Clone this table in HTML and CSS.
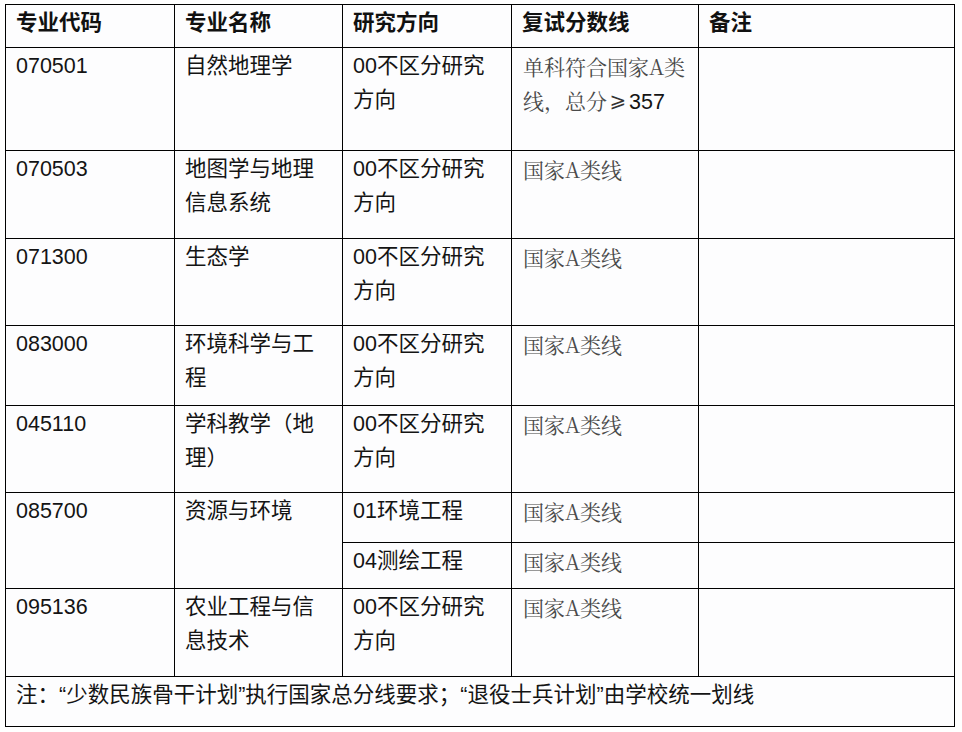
FILE: index.html
```html
<!DOCTYPE html>
<html lang="zh-CN">
<head>
<meta charset="utf-8">
<title>复试分数线</title>
<link rel="stylesheet" href="styles.css">
</head>
<body>
<div class="wrap">
<table class="score">
  <colgroup>
    <col class="c1"><col class="c2"><col class="c3"><col class="c4"><col class="c5">
  </colgroup>
  <thead>
    <tr class="h-head">
      <th>专业代码</th><th>专业名称</th><th>研究方向</th><th>复试分数线</th><th>备注</th>
    </tr>
  </thead>
  <tbody>
    <tr class="h-103">
      <td>070501</td><td>自然地理学</td><td>00不区分研究方向</td>
      <td class="line"><span class="seg">单科符合国家A类</span><span class="seg">线，总分</span><span class="ge">⩾</span><span class="num">357</span></td><td></td>
    </tr>
    <tr class="h-88">
      <td>070503</td><td>地图学与地理信息系统</td><td>00不区分研究方向</td><td class="line">国家A类线</td><td></td>
    </tr>
    <tr class="h-87">
      <td>071300</td><td>生态学</td><td>00不区分研究方向</td><td class="line">国家A类线</td><td></td>
    </tr>
    <tr class="h-80">
      <td>083000</td><td>环境科学与工程</td><td>00不区分研究方向</td><td class="line">国家A类线</td><td></td>
    </tr>
    <tr class="h-87">
      <td>045110</td><td>学科教学（地理）</td><td>00不区分研究方向</td><td class="line">国家A类线</td><td></td>
    </tr>
    <tr class="h-50">
      <td rowspan="2">085700</td><td rowspan="2">资源与环境</td><td>01环境工程</td><td class="line">国家A类线</td><td></td>
    </tr>
    <tr class="h-46">
      <td>04测绘工程</td><td class="line">国家A类线</td><td></td>
    </tr>
    <tr class="h-88">
      <td>095136</td><td>农业工程与信息技术</td><td>00不区分研究方向</td><td class="line">国家A类线</td><td></td>
    </tr>
    <tr class="h-50">
      <td colspan="5">注：“少数民族骨干计划”执行国家总分线要求；“退役士兵计划”由学校统一划线</td>
    </tr>
  </tbody>
</table>
</div>
</body>
</html>
```

FILE: styles.css
```css
html, body {
  margin: 0;
  padding: 0;
  background: #ffffff;
}

.wrap {
  padding: 4px 0 0 5px;
}

.score {
  border-collapse: collapse;
  table-layout: fixed;
  width: 949px;
  font-family: "Liberation Sans", "Noto Sans CJK SC", sans-serif;
  font-size: 21.5px;
  line-height: 34px;
  color: #141414;
  background: #fdfdfe;
}

.c1 { width: 169px; }
.c2 { width: 168px; }
.c3 { width: 169px; }
.c4 { width: 187px; }
.c5 { width: 256px; }

.score th,
.score td {
  border: 1px solid #000000;
  padding: 1px 10px 0 10px;
  vertical-align: top;
  text-align: left;
  word-break: break-all;
}

.score th {
  font-weight: bold;
  color: #111111;
}

.score td.line {
  font-family: "Noto Serif CJK SC", "Liberation Serif", "Noto Sans CJK SC", serif;
  font-size: 21px;
  color: #4a4a4a;
  padding-left: 11px;
  padding-right: 6px;
}

.score .seg {
  display: inline-block;
}

.score .num {
  font-family: "Liberation Sans", sans-serif;
  font-size: 21.5px;
  color: #141414;
}

.score .ge {
  display: inline-block;
  width: 22px;
  text-align: center;
  font-family: "DejaVu Sans", sans-serif;
  font-size: 20px;
  line-height: 34px;
  vertical-align: top;
  color: #333333;
}

.h-head { height: 43px; }
.h-103 { height: 103px; }
.h-88 { height: 88px; }
.h-87 { height: 87px; }
.h-80 { height: 80px; }
.h-50 { height: 50px; }
.h-46 { height: 46px; }
```
